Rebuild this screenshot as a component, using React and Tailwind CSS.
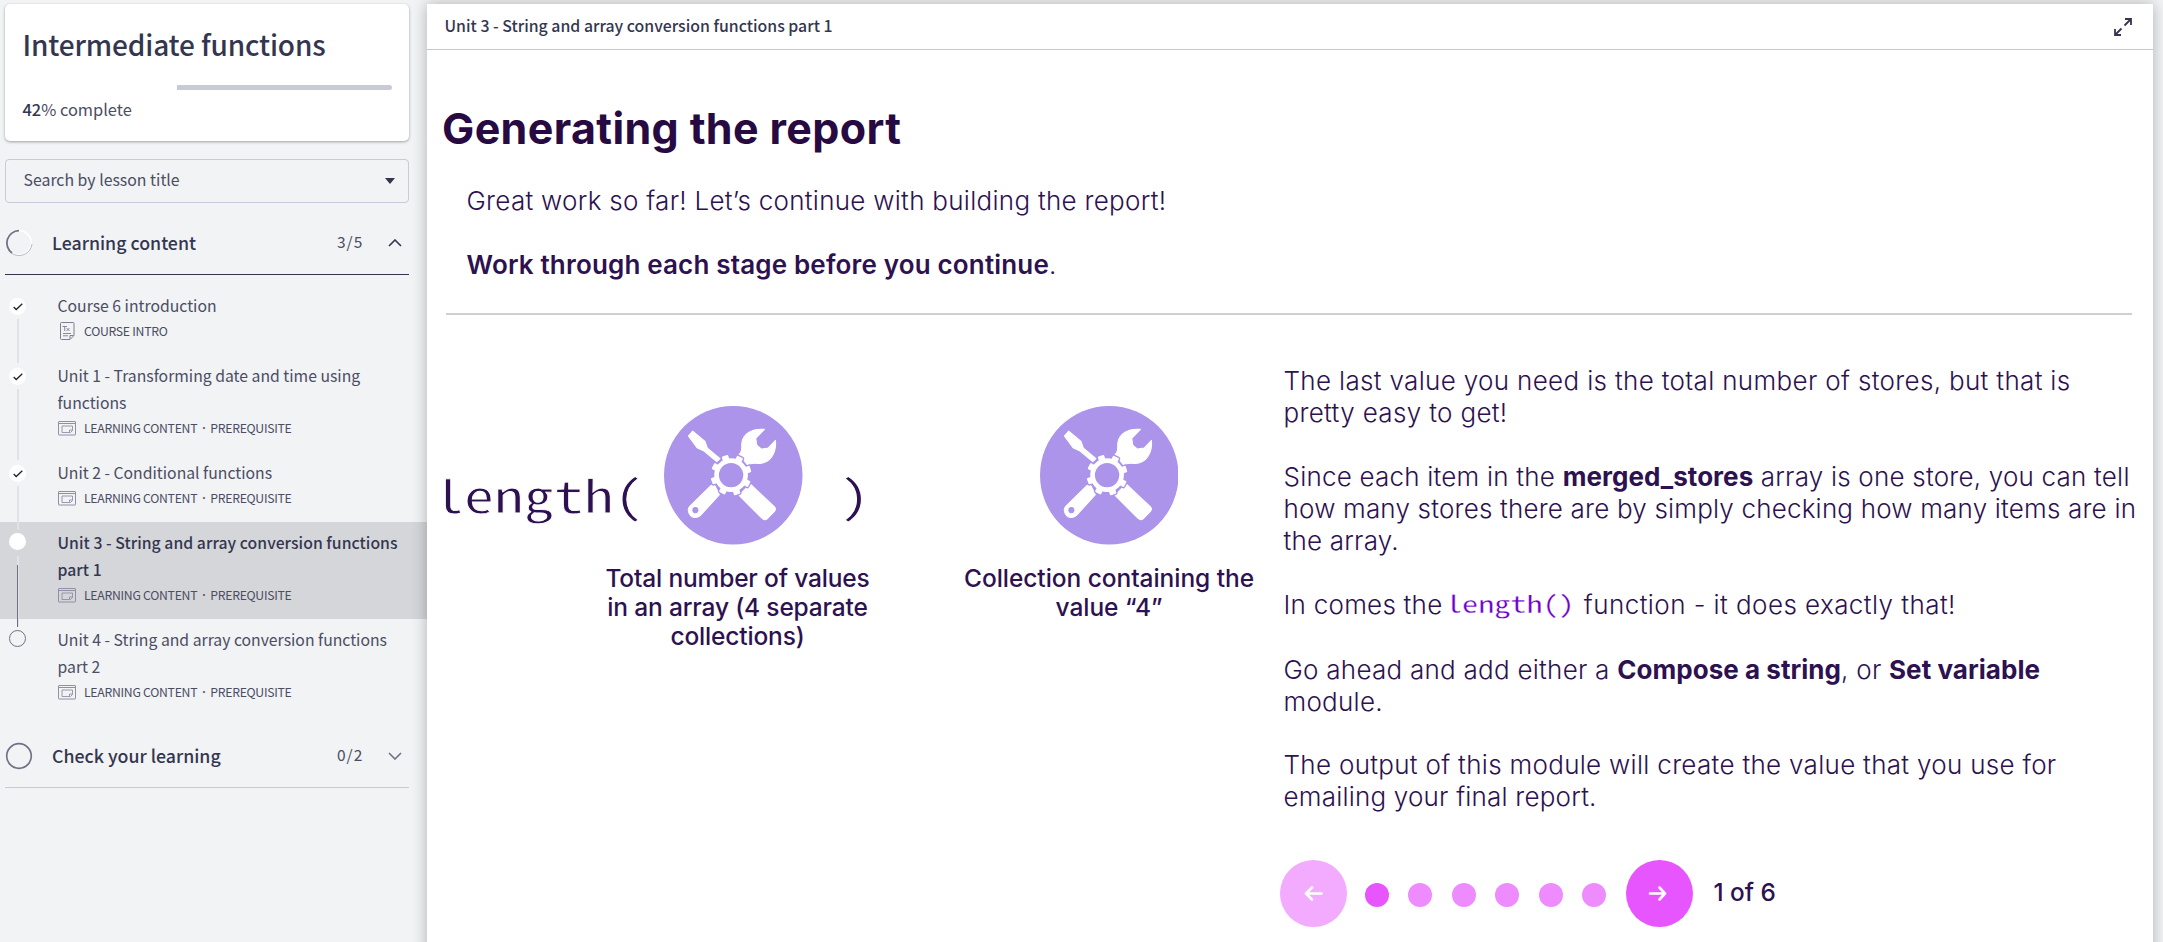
const SANS = "font-['Noto_Sans_CJK_SC','Noto_Sans',sans-serif]";
const MONO = "font-['Noto_Sans_Mono_CJK_SC','Liberation_Mono',monospace]";

function Tools() {
  return (
    <svg viewBox="0 0 415 415" className="h-[138.500px] w-[138.500px] shrink-0">
      <circle cx="207.5" cy="207.5" r="207.5" fill="#ab94ea" />
      <g fill="#fff" stroke="#fff" strokeWidth="3" strokeLinejoin="round">
        <path d="M73 90 L86 75 L123 106 L130 126 L168 158 L158 167 L120 135 L99 125 Z" />
        <path d="M301 70 L275 97 L278 117 L292 129 L312 126 L334 103 C338 140 318 174 282 172 C266 171 255 172 247 177 L225 145 C236 136 232 128 233 112 C236 85 262 66 301 70 Z" />
        <path d="M141 238 L78 300 C66 312 77 336 96 334 C102 333 106 331 110 327 L166 266 L150 234 Z" />
        <path d="M225 268 L258 233 L331 302 Q337 309 331 316 L309 338 Q302 344 294 337 Z" />
      </g>
      <circle cx="94" cy="312" r="9" fill="#ab94ea" />
      <circle cx="201" cy="207" r="56" fill="#ab94ea" />
      {[-108, -63, -18, 27, 72, 117, 162, 207].map((a) => (
        <rect key={a} x="245" y="197" width="17" height="20" rx="3" fill="#fff" stroke="#ab94ea" strokeWidth="8" paintOrder="stroke" transform={`rotate(${a} 201 207)`} />
      ))}
      <circle cx="201" cy="207" r="43.5" fill="#ab94ea" stroke="#fff" strokeWidth="14" />
    </svg>
  );
}

function SlideIcon() {
  return (
    <svg viewBox="0 0 18 15" className="h-[15px] w-[18px]" fill="none" stroke="#8f90a3">
      <rect x="0.5" y="0.5" width="17" height="13.5" rx="0.5" />
      <path d="M0.5 2.5H17.5" />
      <path d="M11.500 11.500H4V5H14.500V9.500L12.500 11.500Z M14.500 9H11.500V11.500" strokeWidth="0.900" />
    </svg>
  );
}

function DocIcon() {
  return (
    <svg viewBox="0 0 18 18" className="h-[18px] w-[18px]" fill="none" stroke="#7d7f93">
      <path d="M12 17.500H3.500Q2.500 17.500 2.500 16.500V1.500Q2.500 0.500 3.500 0.500H15Q16 0.500 16 1.500V13.500Z M12 17V13.500H15.500" />
      <path d="M4.500 4.500H9M6.700 4.500V9M8.500 6L11.500 9M11.500 6L8.500 9M5 11.500H13M5 13.800H10" strokeWidth="0.900" />
    </svg>
  );
}

function Marker({ state }) {
  if (state === "done")
    return (
      <div className="flex size-[17px] items-center justify-center rounded-full bg-white">
        <svg viewBox="0 0 10 8" className="h-2 w-2.5" fill="none" stroke="#222" strokeWidth="1.300">
          <path d="M0.700 4L3.200 6.500L9.300 0.800" />
        </svg>
      </div>
    );
  if (state === "current") return <div className="-mt-0.5 mb-0.5 size-[17px] rounded-full bg-white" />;
  return <div className="-mt-0.5 size-[17px] rounded-full border border-[#6f7086]" />;
}

function Lesson({ state, lines, doc, last }) {
  const on = state === "current";
  return (
    <div className={`flex ${on ? "bg-[#d5d6da]" : ""}`}>
      <div className="flex w-[57.500px] flex-col pt-[13px] pl-[9px]">
        <Marker state={state} />
        {!last && (
          <div className="mt-1 -mb-2 ml-2 flex w-0.5 flex-1 flex-col bg-[#e1e2e5]">
            {on && <div className="mt-[9px] w-px flex-1 bg-[#6f7086]" />}
          </div>
        )}
      </div>
      <div className="pt-[7px] pb-3">
        {lines.map((l) => (
          <div key={l} className={`h-[27px] text-[15.750px] leading-[27px] whitespace-nowrap ${on ? "font-medium tracking-[0.04px] text-[#343650]" : "text-[#4b4d63]"}`}>
            {l}
          </div>
        ))}
        <div className="flex h-6 items-center text-[12.250px] leading-6 tracking-[-0.280px] whitespace-nowrap text-[#4b4d63]">
          <span className="w-[26.500px]">{doc ? <DocIcon /> : <SlideIcon />}</span>
          {doc ? (
            <span>COURSE INTRO</span>
          ) : (
            <>
              <span>LEARNING CONTENT</span>
              <span className="w-[13px] pt-0.5 text-center font-['Noto_Sans',sans-serif] font-semibold">·</span>
              <span>PREREQUISITE</span>
            </>
          )}
        </div>
      </div>
    </div>
  );
}

function Section({ title, count, open }) {
  return (
    <div className={`mr-[18px] ml-[5px] flex h-[63px] items-center border-b ${open ? "border-[#343650]" : "border-[#c8cad3]"}`}>
      <svg viewBox="0 0 28 28" className="h-7 w-7" fill="none">
        <circle cx="14" cy="14" r="12.300" stroke={open ? "#fff" : "#6f7086"} strokeWidth="1.700" />
        {open && <path d="M14 1.700A12.300 12.300 0 0 0 7 24" stroke="#6f7086" strokeWidth="1.800" />}
        {open && <path d="M7 24.500A13 13 0 0 0 27 15" stroke="#9b9cab" strokeWidth="0.700" />}
      </svg>
      <span className="ml-[19px] flex-1 pb-0.5 text-[17.750px] font-medium text-[#343650]">{title}</span>
      <span className="w-[51px] pb-0.5 text-[15.5px] tracking-[1px] text-[#4b4d63]">{count}</span>
      <svg viewBox="0 0 14 8" className="mr-[7px] h-2 w-3.5" fill="none" stroke={open ? "#343650" : "#6f7086"} strokeWidth="1.600">
        <path d={open ? "M1 7L7 1L13 7" : "M1 1L7 7L13 1"} />
      </svg>
    </div>
  );
}

const Dot = ({ on }) => <div className={`size-6 rounded-full ${on ? "bg-[#e755ff]" : "bg-[#ee8bff]"}`} />;

const Strong = ({ children }) => <b className="font-bold tracking-[0.040px]">{children}</b>;

export default function App() {
  return (
    <div className={`flex h-[942px] w-[2163px] overflow-hidden bg-[#f1f3f5] pt-1 ${SANS}`}>
      <aside className="flex w-[427px] shrink-0 flex-col">
        <div className="ml-[5px] h-[137px] w-[404px] rounded-[5px] bg-white px-[17.500px] pt-[22px] shadow-[0_1px_3px_rgba(0,0,0,0.35)]">
          <h1 className="h-9 text-[28px] leading-9 font-medium tracking-[-0.150px] whitespace-nowrap text-[#343650]">Intermediate functions</h1>
          <div className="mt-[23px] ml-[154.500px] h-[5px] w-[215px] rounded-r-sm bg-[#c8cbd6]" />
          <div className="mt-[7px] h-6 text-[16.400px] leading-6 text-[#4b4d63]">
            <b className="font-medium text-[#343650]">42</b>% complete
          </div>
        </div>
        <div className="mt-[18px] ml-[5px] flex h-11 w-[404px] items-center justify-between rounded border border-[#c8cad8] pr-[13px] pl-[17.500px] text-[15.850px] text-[#4b4d63]">
          <span className="pb-0.5">Search by lesson title</span>
          <svg viewBox="0 0 10 6" className="h-1.5 w-2.5" fill="#343650"><path d="M0 0H10L5 6Z" /></svg>
        </div>
        <div className="mt-[9px]"><Section title="Learning content" count="3/5" open /></div>
        <div className="mt-[10px]">
          <Lesson state="done" doc lines={["Course 6 introduction"]} />
          <Lesson state="done" lines={["Unit 1 - Transforming date and time using", "functions"]} />
          <Lesson state="done" lines={["Unit 2 - Conditional functions"]} />
          <Lesson state="current" lines={["Unit 3 - String and array conversion functions", "part 1"]} />
          <Lesson state="todo" last lines={["Unit 4 - String and array conversion functions", "part 2"]} />
        </div>
        <div className="mt-[9px]"><Section title="Check your learning" count="0/2" /></div>
      </aside>

      <main className="h-[960px] w-[1726px] shrink-0 bg-white text-[#2d1150] shadow-[0_0_14px_rgba(0,0,0,0.28)]">
        <header className="flex h-[46px] items-center justify-between border-b border-[#c8c9d2] pr-[21px] pl-[17.500px] text-[15.850px] font-medium text-[#343650]">
          <span className="pb-0.5">Unit 3 - String and array conversion functions part 1</span>
          <svg viewBox="0 0 18 18" className="h-[18px] w-[18px]" fill="none" stroke="#343650" strokeWidth="1.800">
            <path d="M11 1H17V7M17 1L10.500 7.500M7 17H1V11M1 17L7.500 10.500" />
          </svg>
        </header>

        <div className="pl-[15px] font-['Inter',sans-serif]">
          <h2 className="mt-[50px] h-14 text-[43px] leading-14 font-bold tracking-[0.360px] text-[#270a42]">Generating the report</h2>
          <p className="mt-[29px] ml-[24.500px] h-8 text-[26px] leading-8 font-light tracking-[0.280px]">Great work so far! Let’s continue with building the report!</p>
          <p className="mt-8 ml-[24.500px] h-8 text-[26px] leading-8 font-light tracking-[0.170px]"><b className="font-semibold">Work through each stage before you continue</b>.</p>
          <div className="mt-8 ml-1 h-0.5 w-[1686px] bg-[#d3cdd5]" />

          <div className="flex">
            <div className="flex w-[841.500px]">
              <div className="w-[455px] pt-[91px]">
                <div className="flex h-[138px] pl-px">
                  <span className={`mt-[52px] -ml-[9px] h-[72px] w-[230px] shrink-0 text-[45px] leading-[72px] whitespace-pre [-webkit-text-stroke:0.8px_white] ${MONO}`}>
                    <span className="inline-block origin-left scale-x-133">length(</span>
                  </span>
                  <Tools />
                  <span className={`mt-[52px] ml-[37px] text-[45px] leading-[72px] [-webkit-text-stroke:0.8px_white] ${MONO}`}>
                    <span className="inline-block origin-left scale-x-133">)</span>
                  </span>
                </div>
                <p className="mt-[20px] ml-[145.500px] w-[300px] text-center text-[24.500px] leading-[29px] font-medium tracking-[-0.160px]">
                  Total number of values<br />in an array (4 separate<br />collections)
                </p>
              </div>
              <div className="flex flex-col items-center pt-[91px] pl-[67px]">
                <Tools />
                <p className="mt-[19.500px] text-center text-[24.500px] leading-[29px] font-medium tracking-[-0.050px] whitespace-nowrap">
                  Collection containing the<br />value “4”
                </p>
              </div>
            </div>
            <div className="pt-[50px] text-[26px] leading-8 font-light tracking-[0.250px] whitespace-nowrap">
              <p className="tracking-[0.330px]">The last value you need is the total number of stores, but that is<br />pretty easy to get!</p>
              <p className="mt-8 tracking-[0.210px]">Since each item in the <Strong>merged_stores</Strong> array is one store, you can tell<br /><span className="tracking-[0.190px]">how many stores there are by simply checking how many items are in</span><br />the array.</p>
              <p className="mt-8 h-8">
                In comes the{" "}
                <span className={`-mt-0.5 mr-[4px] -ml-[4px] inline-block h-8 w-[126px] align-top text-[24px] leading-8 font-normal tracking-normal text-[#6d00cc] [-webkit-text-stroke:0.300px_white] ${MONO}`}>
                  <span className="inline-block origin-left scale-x-134">length()</span>
                </span>
                <span className="tracking-[0.430px]"> function - it does exactly that!</span>
              </p>
              <p className="mt-[33px]">Go ahead and add either a <Strong>Compose a string</Strong>, or <Strong>Set variable</Strong><br />module.</p>
              <p className="mt-[31px] tracking-[0.300px]">The output of this module will create the value that you use for<br /><span className="tracking-[0.200px]">emailing your final report.</span></p>
              <div className="mt-[47px] -ml-1 flex h-[67px] items-center">
                <div className="flex size-[67px] items-center justify-center rounded-full bg-[#f2abff]">
                  <svg viewBox="0 0 19 15" className="h-[15px] w-[19px]" fill="none" stroke="#fff" strokeWidth="2.600" strokeLinecap="round" strokeLinejoin="round"><path d="M17.500 7.500H2M8 1.500L2 7.500L8 13.500" /></svg>
                </div>
                <div className="mt-[3px] ml-[18px] flex w-[242px] justify-between"><Dot on /><Dot /><Dot /><Dot /><Dot /><Dot /></div>
                <div className="ml-[19px] flex size-[67px] items-center justify-center rounded-full bg-[#e755ff]">
                  <svg viewBox="0 0 19 15" className="-ml-1 h-[15px] w-[19px]" fill="none" stroke="#fff" strokeWidth="2.600" strokeLinecap="round" strokeLinejoin="round"><path d="M2 7.500H17M11.500 1.500L17 7.500L11.500 13.500" /></svg>
                </div>
                <span className="mb-[3px] ml-[21px] text-[24.300px] font-medium tracking-normal">1 of 6</span>
              </div>
            </div>
          </div>
        </div>
      </main>
    </div>
  );
}
